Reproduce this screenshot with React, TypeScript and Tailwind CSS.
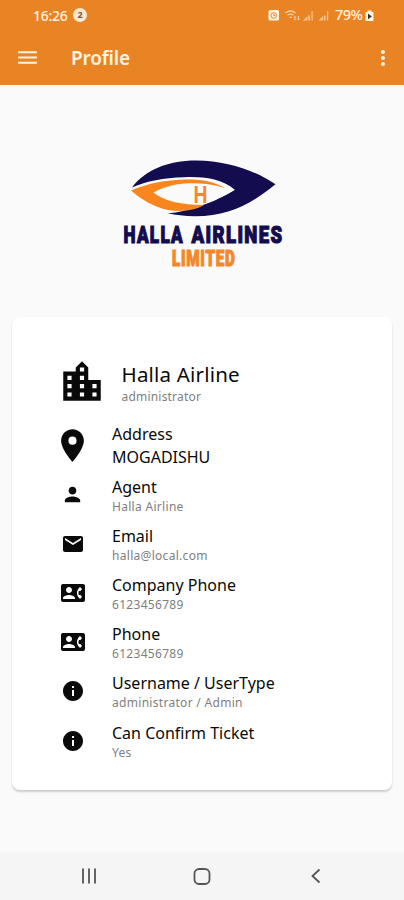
import type { ReactNode } from 'react';
import { MdContactPhone, MdEmail, MdInfo, MdLocationCity, MdLocationOn, MdMenu, MdMoreVert, MdPerson } from 'react-icons/md';

interface ProfileField {
  label: string;
  value: string;
  icon: ReactNode;
}

const fields: ProfileField[] = [
  { label: 'Agent', value: 'Halla Airline', icon: <MdPerson size={23} /> },
  { label: 'Email', value: 'halla@local.com', icon: <MdEmail size={24} /> },
  { label: 'Company Phone', value: '6123456789', icon: <MdContactPhone size={24} /> },
  { label: 'Phone', value: '6123456789', icon: <MdContactPhone size={24} /> },
  { label: 'Username / UserType', value: 'administrator / Admin', icon: <MdInfo size={24} /> },
  { label: 'Can Confirm Ticket', value: 'Yes', icon: <MdInfo size={24} /> },
];

function StatusBar() {
  return (
    <div className="flex h-[30px] items-center pl-[33px] pr-[30px] text-[14px] font-medium text-[#fff3e0]">
      <span className="w-[40px] tracking-[-0.3px]">16:26</span>
      <span className="flex h-[14px] w-[14px] items-center justify-center rounded-full bg-[#fbe6cf] text-[9px] font-bold text-[#6b5a48]">2</span>
      <svg className="ml-auto" width="63" height="14" viewBox="0 0 63 14" fill="none">
        <rect x="0.5" y="2" width="10.5" height="10.5" rx="1.5" fill="#fff3e0" />
        <circle cx="5.8" cy="7.5" r="2.8" stroke="#e98425" />
        <path d="M5.8 6V7.5h1.2" stroke="#e98425" />
        <g stroke="#fad9b5" strokeWidth="1.3" opacity=".85">
          <path d="M17.5 5q5-4 10 0M19.5 7.2q3-2.2 6 0M21.5 9.3h2.5" />
          <path d="M27 12.5V8.5m-1.2 1.3L27 8.5l1.2 1.3M30.5 8v4m-1.2-1.2L30.5 12l1.2-1.2" strokeWidth="1" />
        </g>
        <g fill="#fad9b5" opacity=".75">
          <path d="M35 12.5l4.5-4.5v4.5zM40.3 7.5h1.8v5h-1.8zM43.5 3h1.2v9.5h-1.2zM50.5 12.5l4.5-4.5v4.5zM55.8 7.5h1.8v5h-1.8zM59 3h1.2v9.5H59z" />
        </g>
      </svg>
      <span className="ml-1 w-[30px] text-[14.5px] tracking-[-0.5px]">79%</span>
      <svg width="9" height="14" viewBox="0 0 9 14">
        <path d="M2.5 2.5h4V4h2v9H.5V4h2z" fill="#fff3e0" />
        <path d="M3 5.5l3.8 2.9L3 11.3z" fill="#3b3027" />
      </svg>
    </div>
  );
}

function AirlineLogo() {
  return (
    <svg className="shrink-0" width="184" height="125" viewBox="110 150 184 125">
      {/* Upper lid and right side */}
      <path
        d="M132 187.5C145 170 168 160.5 196 160.5C228 161 254 170 275.5 184.3C251 204 229 216 195 216.3Q179 216 168 213.3C192 213 207 206 218 199Q229 194 235 190C221 178 201 176.5 184 177.3C163 178 147 181 132 187.5Z"
        fill="#130d4f"
      />
      <path d="M196 216C222 215 240 206 255 196L235 190Q218 201 196 207Q184 212 168 213.3Z" fill="#130d4f" />
      {/* Lower lid */}
      <path
        d="M131 190.5C147 183.5 165 180 187 179.5C204 179.5 215 182 225 188C207 182.5 190 182.5 176 184.5Q163 187 153.5 192.5C164 201 181 205 204 205C194 211 180 212 168 210C154 207 142 200 131 190.5Z"
        fill="#f8851d"
      />
      <text x="193.5" y="203" fontFamily="Liberation Sans" fontWeight="700" fontSize="23" textLength="14" lengthAdjust="spacingAndGlyphs" fill="#ec8a35">H</text>
      <g fontFamily="Roboto" fontWeight="900">
        <g fill="#130d4f" stroke="#130d4f" strokeWidth="1.2" fontSize="24" letterSpacing="1.8">
          <text x="123.5" y="242.5" textLength="60.5" lengthAdjust="spacingAndGlyphs">HALLA</text>
          <text x="191.5" y="242.5" textLength="92" lengthAdjust="spacingAndGlyphs">AIRLINES</text>
        </g>
        <text x="172" y="265.7" fontSize="21.5" letterSpacing="1" textLength="63.5" lengthAdjust="spacingAndGlyphs" fill="#f3872c" stroke="#f3872c" strokeWidth="1.1">LIMITED</text>
      </g>
    </svg>
  );
}

function FieldRow({ label, value, icon }: ProfileField) {
  return (
    <div className="flex h-[49.2px]">
      <div className="flex w-[53px] items-center justify-center pb-[2px]">{icon}</div>
      <div className="ml-[13px] pt-[5.6px]">
        <p className="text-[16px] leading-[20px]">{label}</p>
        <p className="text-[12px] leading-[20px] tracking-[0.3px] text-[#808080]">{value}</p>
      </div>
    </div>
  );
}

export default function App() {
  return (
    <div className="flex h-[900px] w-[404px] flex-col overflow-hidden bg-[#fafafa] font-['Noto_Sans',sans-serif] text-[#0a0a0a]">
      <header className="h-[85px] shrink-0 bg-[#e98425]">
        <StatusBar />
        <div className="flex h-[55px] items-center pl-[15px] pr-[9px] text-[#fff3e0]">
          <MdMenu size={25} />
          <h1 className="ml-[31px] pt-[1px] text-[19px] font-semibold tracking-[-0.2px]">Profile</h1>
          <MdMoreVert size={24} className="ml-auto" />
        </div>
      </header>

      <main className="flex-1">
        <div className="flex h-[232px] pl-[110px] pt-[65px]">
          <AirlineLogo />
        </div>

        <section className="mx-3 h-[473px] rounded-[8px] bg-white pl-[34px] pt-[41px] shadow-[0_2px_2px_rgba(0,0,0,0.18)]">
          <div className="flex h-[64px]">
            <MdLocationCity size={50} className="ml-[11px] -mt-[1px]" />
            <div className="ml-[14.5px] pt-[2px]">
              <h2 className="text-[20.5px] leading-[28px] tracking-[0.2px]">Halla Airline</h2>
              <p className="text-[12px] leading-[18px] tracking-[0.2px] text-[#808080]">administrator</p>
            </div>
          </div>

          <div className="flex h-[49px]">
            <div className="flex w-[53px] justify-center pt-[4px]">
              <MdLocationOn size={39} />
            </div>
            <div className="ml-[13px] pt-[1px] text-[16px] leading-[23px]">
              <p>Address</p>
              <p>MOGADISHU</p>
            </div>
          </div>

          {fields.map((field) => (
            <FieldRow key={field.label} {...field} />
          ))}
        </section>
      </main>

      <nav className="flex h-[48px] shrink-0 items-center bg-[#f5f5f5] pl-[80px]">
        <svg width="245" height="20" viewBox="0 0 245 20" fill="none" stroke="#555">
          <path d="M3 2.5v15M9 2.5v15M15 2.5v15" strokeWidth="1.8" />
          <rect x="114.5" y="3" width="15" height="15" rx="4.5" strokeWidth="1.8" />
          <path d="M239.5 3.5l-7 6.5 7 6.5" strokeWidth="1.8" />
        </svg>
      </nav>
    </div>
  );
}
